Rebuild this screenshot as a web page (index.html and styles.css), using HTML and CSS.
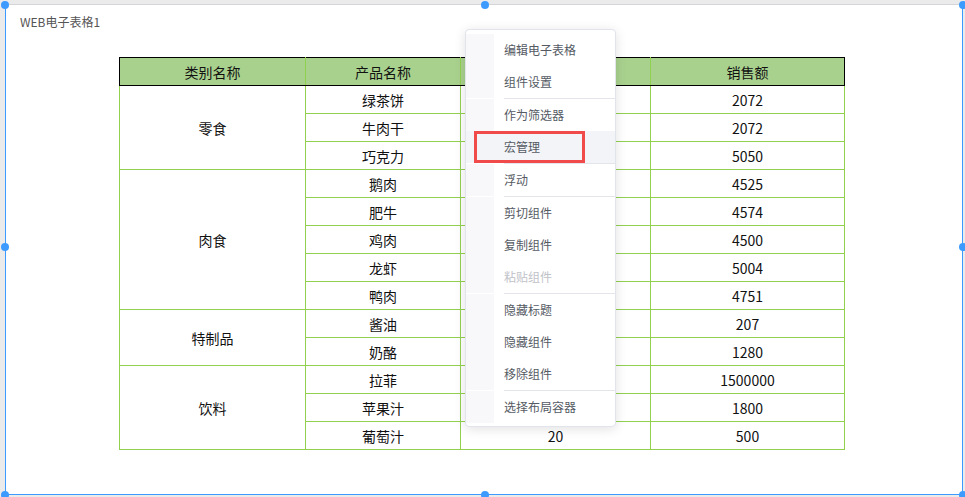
FILE: index.html
```html
<!DOCTYPE html>
<html lang="zh-CN">
<head>
    <meta charset="UTF-8">
    <title>WEB电子表格1</title>
    <link rel="stylesheet" href="styles.css">
</head>
<body>

    <!-- Selected widget -->
    <div class="widget">
        <div class="widget-title">WEB电子表格1</div>

        <!-- third column sits under the context menu, only its last value shows -->
        <table class="sheet">
            <colgroup>
                <col style="width: 186px">
                <col style="width: 155px">
                <col style="width: 190px">
                <col style="width: 194px">
            </colgroup>
            <thead>
                <tr>
                    <th>类别名称</th>
                    <th>产品名称</th>
                    <th></th>
                    <th>销售额</th>
                </tr>
            </thead>
            <tbody>
                <tr><td rowspan="3">零食</td><td>绿茶饼</td><td></td><td>2072</td></tr>
                <tr><td>牛肉干</td><td></td><td>2072</td></tr>
                <tr><td>巧克力</td><td></td><td>5050</td></tr>
                <tr><td rowspan="5">肉食</td><td>鹅肉</td><td></td><td>4525</td></tr>
                <tr><td>肥牛</td><td></td><td>4574</td></tr>
                <tr><td>鸡肉</td><td></td><td>4500</td></tr>
                <tr><td>龙虾</td><td></td><td>5004</td></tr>
                <tr><td>鸭肉</td><td></td><td>4751</td></tr>
                <tr><td rowspan="2">特制品</td><td>酱油</td><td></td><td>207</td></tr>
                <tr><td>奶酪</td><td></td><td>1280</td></tr>
                <tr><td rowspan="3">饮料</td><td>拉菲</td><td></td><td>1500000</td></tr>
                <tr><td>苹果汁</td><td></td><td>1800</td></tr>
                <tr><td>葡萄汁</td><td>20</td><td>500</td></tr>
            </tbody>
        </table>

        <!-- resize handles -->
        <span class="handle h-tl"></span>
        <span class="handle h-tm"></span>
        <span class="handle h-tr"></span>
        <span class="handle h-ml"></span>
        <span class="handle h-mr"></span>
        <span class="handle h-bl"></span>
        <span class="handle h-bm"></span>
        <span class="handle h-br"></span>
    </div>

    <!-- Context menu -->
    <ul class="ctx-menu">
        <li class="item">编辑电子表格</li>
        <li class="item">组件设置</li>
        <li class="divider"></li>
        <li class="item">作为筛选器</li>
        <li class="item active">宏管理<span class="mark"></span></li>
        <li class="divider"></li>
        <li class="item">浮动</li>
        <li class="divider"></li>
        <li class="item">剪切组件</li>
        <li class="item">复制组件</li>
        <li class="item disabled">粘贴组件</li>
        <li class="divider"></li>
        <li class="item">隐藏标题</li>
        <li class="item">隐藏组件</li>
        <li class="item">移除组件</li>
        <li class="divider"></li>
        <li class="item">选择布局容器</li>
    </ul>

</body>
</html>
```

FILE: styles.css
```css
/* page */
html, body { margin: 0; padding: 0; }
body { width: 965px; height: 497px; background: #ebebeb; overflow: hidden; position: relative; font-family: "Noto Sans CJK SC", "Noto Sans", sans-serif; }

/* widget frame */
.widget { position: relative; box-sizing: border-box; width: 958px; height: 491px; margin: 4px 0 0 5px; background: #fff; border: 1px solid #3d9bff; border-top-color: #d3d5d8; }
.widget-title { height: 16px; padding: 9px 0 0 14px; font-size: 12px; line-height: 16px; color: #555; }

.handle { position: absolute; width: 8px; height: 8px; border-radius: 50%; background: #3d9bff; }
.h-tl { left: -5px; top: -4px; }
.h-tm { left: 475px; top: -4px; }
.h-tr { right: -5px; top: -4px; }
.h-ml { left: -5px; top: 238px; }
.h-mr { right: -5px; top: 238px; }
.h-bl { left: -5px; bottom: -5px; }
.h-bm { left: 475px; bottom: -5px; }
.h-br { right: -5px; bottom: -5px; }

/* spreadsheet */
.sheet { border-collapse: collapse; table-layout: fixed; width: 726px; margin: 27px 0 0 113px; font-size: 14px; color: #111; }
.sheet th, .sheet td { padding: 0; text-align: center; border: 1px solid #92d050; line-height: 18px; }
.sheet th { height: 27px; background: #a9d18e; font-weight: normal; border-top-color: #000; border-bottom-color: #000; }
.sheet th:first-child { border-left-color: #000; }
.sheet th:last-child { border-right-color: #000; }
.sheet td { height: 27px; }

/* context menu */
.ctx-menu { position: absolute; left: 465px; top: 29px; box-sizing: border-box; width: 151px; margin: 0; padding: 4px 0 3px; list-style: none; background: #fff; border: 1px solid #e1e4ea; border-radius: 4px; box-shadow: 0 2px 12px rgba(0, 0, 0, 0.12); font-size: 12px; color: #555a63; }
.ctx-menu .item { position: relative; height: 32px; line-height: 32px; padding-left: 38px; background: linear-gradient(to right, #f8f8fa 28px, #fff 28px); }
.ctx-menu .item.active { background: #f3f4f7; }
.ctx-menu .item.disabled { color: #bfc2c8; }
.ctx-menu .divider { height: 1px; margin-left: 38px; background: #e3e5ea; }
.ctx-menu .mark { position: absolute; left: 8px; top: 0; box-sizing: border-box; width: 111px; height: 32px; border: 3px solid #f04a4a; }
```
